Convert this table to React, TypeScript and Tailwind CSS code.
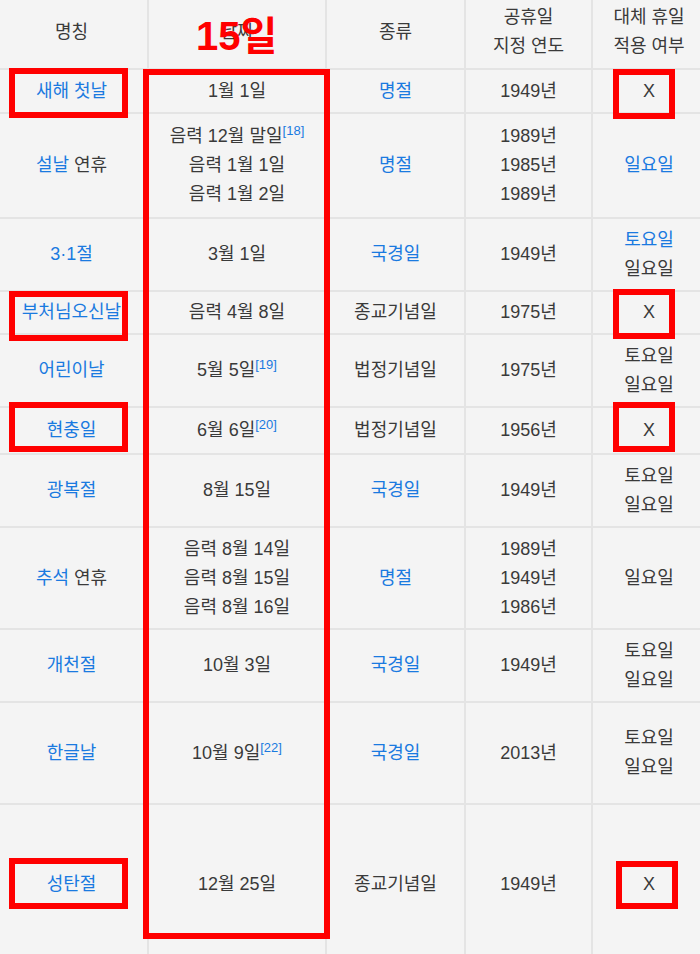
import type { JSX, ReactNode } from 'react';

// 공휴일 표 + 빨간 표시(주석) 덧그림

const L = ({ children }: { children: ReactNode }): JSX.Element => (
  <span className="text-[#1a7ae0]">{children}</span>
);

const Ref = ({ n }: { n: number }): JSX.Element => (
  <sup className="relative -top-[7px] align-baseline text-[13px] leading-none text-[#1a7ae0]">[{n}]</sup>
);

type Row = {
  h: string;
  name: ReactNode;
  date: ReactNode;
  kind: ReactNode;
  year: ReactNode;
  alt: ReactNode;
};

const both = (
  <>
    토요일
    <br />
    일요일
  </>
);

const rows: Row[] = [
  { h: 'h-[44px]', name: <L>새해 첫날</L>, date: '1월 1일', kind: <L>명절</L>, year: '1949년', alt: 'X' },
  {
    h: 'h-[105px]',
    name: (
      <>
        <L>설날</L> 연휴
      </>
    ),
    date: (
      <>
        음력 12월 말일
        <Ref n={18} />
        <br />
        음력 1월 1일
        <br />
        음력 1월 2일
      </>
    ),
    kind: <L>명절</L>,
    year: (
      <>
        1989년
        <br />
        1985년
        <br />
        1989년
      </>
    ),
    alt: <L>일요일</L>,
  },
  {
    h: 'h-[73px]',
    name: <L>3·1절</L>,
    date: '3월 1일',
    kind: <L>국경일</L>,
    year: '1949년',
    alt: (
      <>
        <L>토요일</L>
        <br />
        일요일
      </>
    ),
  },
  { h: 'h-[43px]', name: <L>부처님오신날</L>, date: '음력 4월 8일', kind: '종교기념일', year: '1975년', alt: 'X' },
  {
    h: 'h-[73px]',
    name: <L>어린이날</L>,
    date: (
      <>
        5월 5일
        <Ref n={19} />
      </>
    ),
    kind: '법정기념일',
    year: '1975년',
    alt: both,
  },
  {
    h: 'h-[47px]',
    name: <L>현충일</L>,
    date: (
      <>
        6월 6일
        <Ref n={20} />
      </>
    ),
    kind: '법정기념일',
    year: '1956년',
    alt: 'X',
  },
  { h: 'h-[73px]', name: <L>광복절</L>, date: '8월 15일', kind: <L>국경일</L>, year: '1949년', alt: both },
  {
    h: 'h-[102px]',
    name: (
      <>
        <L>추석</L> 연휴
      </>
    ),
    date: (
      <>
        음력 8월 14일
        <br />
        음력 8월 15일
        <br />
        음력 8월 16일
      </>
    ),
    kind: <L>명절</L>,
    year: (
      <>
        1989년
        <br />
        1949년
        <br />
        1986년
      </>
    ),
    alt: '일요일',
  },
  { h: 'h-[73px]', name: <L>개천절</L>, date: '10월 3일', kind: <L>국경일</L>, year: '1949년', alt: both },
  {
    h: 'h-[102px]',
    name: <L>한글날</L>,
    date: (
      <>
        10월 9일
        <Ref n={22} />
      </>
    ),
    kind: <L>국경일</L>,
    year: '2013년',
    alt: both,
  },
  { h: 'h-[160px]', name: <L>성탄절</L>, date: '12월 25일', kind: '종교기념일', year: '1949년', alt: 'X' },
];

const td = 'border-2 border-[#e4e4e4] px-1 py-[6px] text-center align-middle';

function Box({ cls }: { cls: string }): JSX.Element {
  return <div className={`pointer-events-none absolute border-[6px] border-[#ff0000] ${cls}`} />;
}

export default function App(): JSX.Element {
  return (
    <div className="relative h-[954px] w-[700px] overflow-hidden bg-[#f4f4f4] font-['Liberation_Sans','Noto_Sans_CJK_KR',sans-serif] text-[18px] leading-[29px] text-[#3a3a3a]">
      <table className="-mt-[4px] -ml-[6px] w-[711px] table-fixed border-collapse">
        <colgroup>
          <col className="w-[153px]" />
          <col className="w-[178px]" />
          <col className="w-[139px]" />
          <col className="w-[127px]" />
          <col className="w-[114px]" />
        </colgroup>
        <thead>
          <tr className="h-[73px]">
            <th className={`${td} border-t-0 font-normal`}>명칭</th>
            <th className={`${td} border-t-0 font-normal`}>날짜</th>
            <th className={`${td} border-t-0 font-normal`}>종류</th>
            <th className={`${td} border-t-0 font-normal`}>
              공휴일
              <br />
              지정 연도
            </th>
            <th className={`${td} border-t-0 font-normal`}>
              대체 휴일
              <br />
              적용 여부
            </th>
          </tr>
        </thead>
        <tbody>
          {rows.map((r, i) => (
            <tr key={i} className={r.h}>
              <td className={td}>{r.name}</td>
              <td className={td}>{r.date}</td>
              <td className={td}>{r.kind}</td>
              <td className={td}>{r.year}</td>
              <td className={td}>{r.alt}</td>
            </tr>
          ))}
        </tbody>
      </table>

      {/* 덧그린 주석 */}
      <div className="pointer-events-none absolute left-[196px] top-[12px] text-[40px] font-bold leading-[48px] text-[#ff0000]">
        15일
      </div>
      <Box cls="left-[143px] top-[69px] h-[870px] w-[187px]" />
      <Box cls="left-[9px] top-[68px] h-[50px] w-[119px]" />
      <Box cls="left-[9px] top-[291px] h-[50px] w-[119px]" />
      <Box cls="left-[9px] top-[402px] h-[50px] w-[119px]" />
      <Box cls="left-[9px] top-[858px] h-[51px] w-[119px]" />
      <Box cls="left-[613px] top-[69px] h-[50px] w-[62px]" />
      <Box cls="left-[613px] top-[289px] h-[50px] w-[62px]" />
      <Box cls="left-[613px] top-[402px] h-[50px] w-[62px]" />
      <Box cls="left-[616px] top-[861px] h-[48px] w-[62px]" />
    </div>
  );
}
